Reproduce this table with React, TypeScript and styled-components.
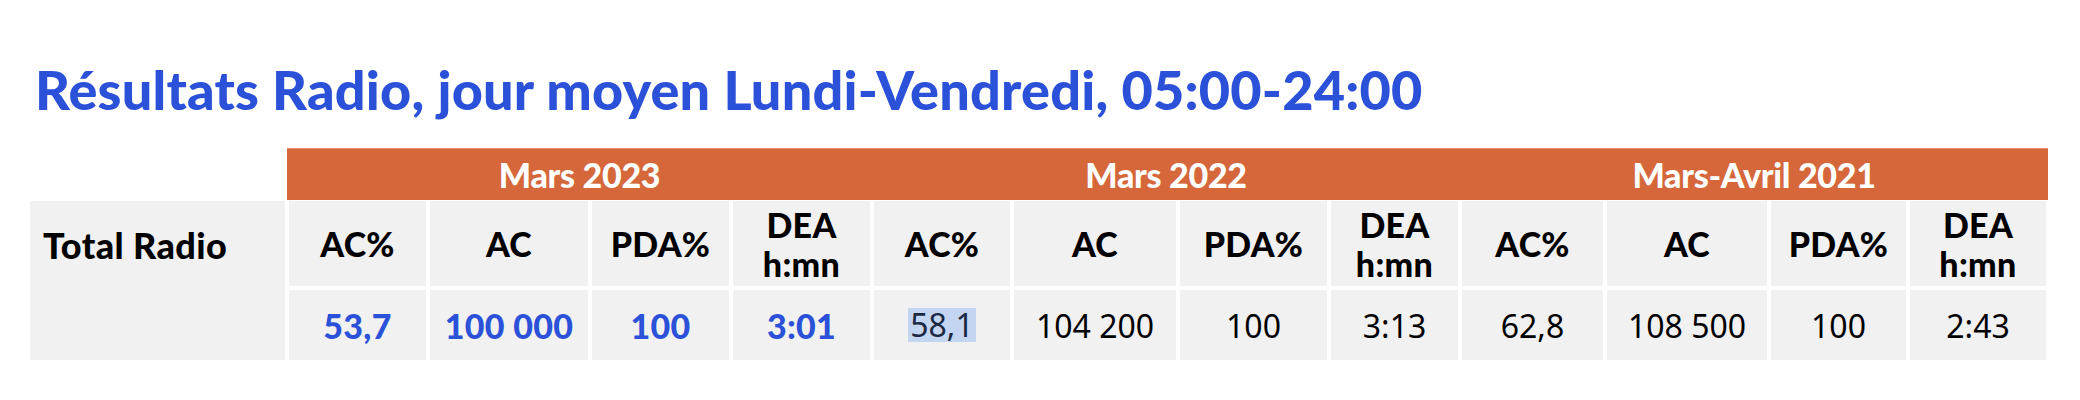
import styled, { createGlobalStyle } from 'styled-components';

const GlobalStyle = createGlobalStyle`
  body {
    margin: 0;
    background: #ffffff;
    font-family: Lato, "Noto Sans", sans-serif;
  }
`;

interface Period {
  label: string;
  values: string[];
  highlight?: boolean;
}

const periods: Period[] = [
  { label: 'Mars 2023', values: ['53,7', '100 000', '100', '3:01'], highlight: true },
  { label: 'Mars 2022', values: ['58,1', '104 200', '100', '3:13'] },
  { label: 'Mars-Avril 2021', values: ['62,8', '108 500', '100', '2:43'] },
];

const columns = ['AC%', 'AC', 'PDA%', 'DEA h:mn'];

function App() {
  return (
    <>
      <GlobalStyle />
      <Styled.Page>
        <Styled.Title>Résultats Radio, jour moyen Lundi-Vendredi, 05:00-24:00</Styled.Title>
        <Styled.Grid>
          {periods.map((p, i) => (
            <Styled.Group key={p.label} start={2 + i * 4}>
              {p.label}
            </Styled.Group>
          ))}
          <Styled.Label>Total Radio</Styled.Label>
          {periods.map((p) =>
            columns.map((c) => (
              <Styled.Head key={p.label + c}>
                {c === 'DEA h:mn' ? (
                  <>
                    DEA
                    <br />
                    h:mn
                  </>
                ) : (
                  c
                )}
              </Styled.Head>
            )),
          )}
          {periods.map((p, pi) =>
            p.values.map((v, vi) => (
              <Styled.Value key={p.label + vi} current={!!p.highlight}>
                {pi === 1 && vi === 0 ? <Styled.Selected>{v}</Styled.Selected> : v}
              </Styled.Value>
            )),
          )}
        </Styled.Grid>
      </Styled.Page>
    </>
  );
}

export default App;

const Styled = {
  Page: styled.div`
    width: 2080px;
    height: 400px;
    padding: 59px 0 0 30px;
    box-sizing: border-box;
  `,
  Title: styled.h1`
    margin: 0;
    padding-left: 5px;
    font-family: Lato, sans-serif;
    font-weight: 900;
    font-size: 54px;
    line-height: 62px;
    letter-spacing: 0.2px;
    color: #2b51d9;
  `,
  Grid: styled.div`
    display: grid;
    margin-top: 27px;
    grid-template-columns: 255px 137px 158px 137px 137px 136px 162px 147px 127px 141px 160px 135px 136px;
    grid-template-rows: 49px 85px 70px;
    column-gap: 4px;
    row-gap: 4px;
  `,
  Group: styled.div<{ start: number }>`
    grid-row: 1;
    grid-column: ${({ start }) => `${start} / span 4`};
    margin: 0 -2px -3px -2px;
    display: flex;
    align-items: center;
    justify-content: center;
    background: #d5673b;
    border-top: 1px solid #e6906c;
    color: #ffffff;
    font-family: Lato, sans-serif;
    font-weight: 900;
    font-size: 34px;
    letter-spacing: -0.3px;
  `,
  Label: styled.div`
    grid-row: 2 / span 2;
    grid-column: 1;
    background: #f1f1f1;
    padding: 22px 0 0 13px;
    font-family: Lato, sans-serif;
    font-weight: 900;
    font-size: 36px;
    letter-spacing: 0.4px;
    color: #000000;
  `,
  Head: styled.div`
    grid-row: 2;
    display: flex;
    align-items: center;
    justify-content: center;
    background: #f1f1f1;
    text-align: center;
    font-family: Lato, sans-serif;
    font-weight: 900;
    font-size: 34px;
    line-height: 39px;
    letter-spacing: 0.3px;
    color: #000000;
  `,
  Value: styled.div<{ current: boolean }>`
    grid-row: 3;
    display: flex;
    align-items: center;
    justify-content: center;
    background: #f1f1f1;
    font-family: ${({ current }) => (current ? 'Lato, sans-serif' : '"Noto Sans", sans-serif')};
    font-weight: ${({ current }) => (current ? 900 : 400)};
    font-size: ${({ current }) => (current ? '34px' : '32px')};
    letter-spacing: ${({ current }) => (current ? '0.3px' : '0')};
    color: ${({ current }) => (current ? '#2b51d9' : '#000000')};
  `,
  Selected: styled.span`
    background: #c4d5f2;
    color: #1b2843;
    padding: 0 2px;
    line-height: 34px;
  `,
};
